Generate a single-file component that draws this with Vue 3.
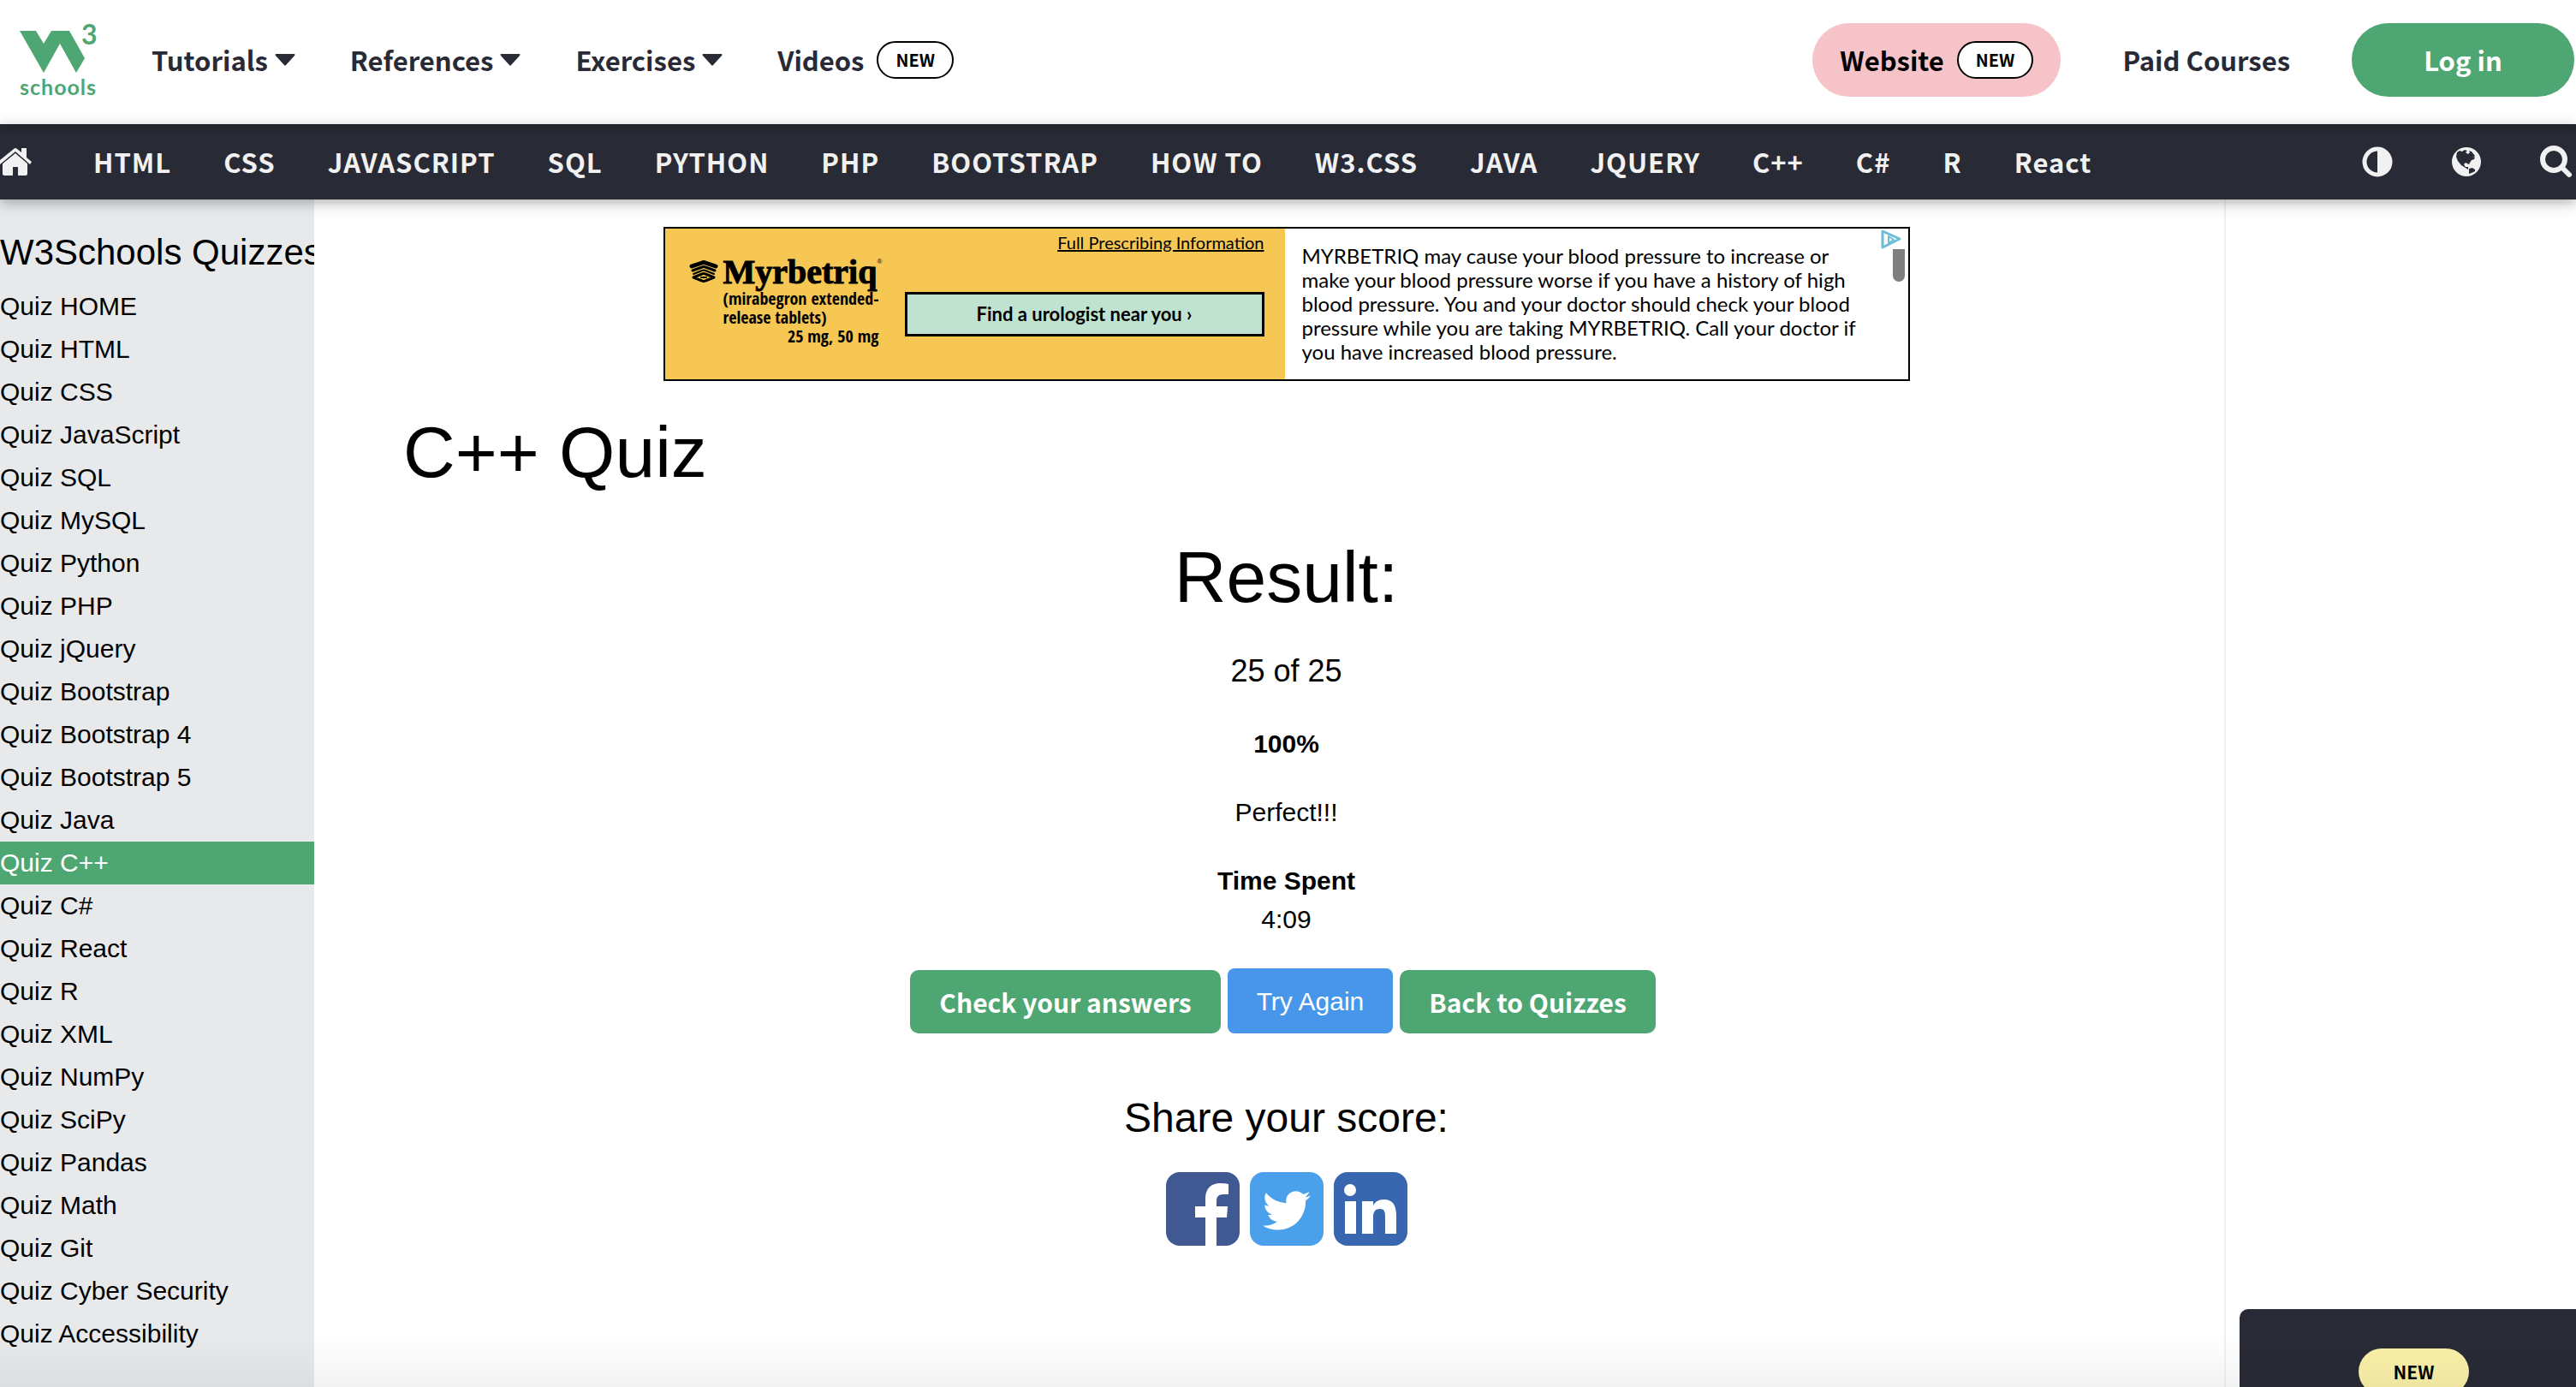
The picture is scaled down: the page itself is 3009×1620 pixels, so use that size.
<script setup>
const menus = ['Tutorials', 'References', 'Exercises']
const topics = [
  'HTML', 'CSS', 'JAVASCRIPT', 'SQL', 'PYTHON', 'PHP', 'BOOTSTRAP', 'HOW TO',
  'W3.CSS', 'JAVA', 'JQUERY', 'C++', 'C#', 'R', 'React',
]
const current = 'C++'
const quizzes = [
  'HOME', 'HTML', 'CSS', 'JavaScript', 'SQL', 'MySQL', 'Python', 'PHP', 'jQuery',
  'Bootstrap', 'Bootstrap 4', 'Bootstrap 5', 'Java', 'C++', 'C#', 'React', 'R', 'XML',
  'NumPy', 'SciPy', 'Pandas', 'Math', 'Git', 'Cyber Security', 'Accessibility',
]
</script>

<template>
  <div class="page">
    <header class="top">
      <a class="logo" href="#" aria-label="W3Schools home">
        <svg width="94" height="86" viewBox="0 0 94 86">
          <path d="M0 9H19L28 24L37 9H58L76 41L66 58L47 24L28 58Z" fill="#4ea673" />
          <text x="72" y="25" class="logo-three">3</text>
          <text x="0" y="84" class="logo-word">schools</text>
        </svg>
      </a>
      <nav class="menus">
        <a v-for="m in menus" :key="m" href="#" class="menu">
          {{ m }}
          <svg width="24" height="14" viewBox="0 0 24 14"><path d="M1 0H23Q24 1 23 2L13 13Q12 14 11 13L1 2Q0 1 1 0Z" fill="currentColor" /></svg>
        </a>
        <a href="#" class="menu videos">Videos <span class="new">NEW</span></a>
      </nav>
      <div class="account">
        <a href="#" class="website">Website <span class="new">NEW</span></a>
        <a href="#" class="menu">Paid Courses</a>
        <button type="button" class="login">Log in</button>
      </div>
    </header>

    <nav class="bar">
      <a href="#" class="home" aria-label="Home">
        <svg width="37" height="32" viewBox="0 0 37 32" fill="#f1f1f1">
          <path d="M18 6L32 18V30Q32 32 30 32H21V22H15V32H6Q3 32 3 30V18Z" />
          <path d="M0 14L16 1Q18 -1 20 1L25 5V0H31V11L37 16L35 19L18 4L0 19Z" />
          <path d="M0 20L18 5L34 19" fill="none" stroke="#282a35" stroke-width="1" />
        </svg>
      </a>
      <a v-for="t in topics" :key="t" href="#" class="topic">{{ t }}</a>
      <div class="tools">
        <button type="button" aria-label="Toggle dark mode">
          <svg width="36" height="36" viewBox="0 0 36 36">
            <circle cx="18" cy="18" r="15" fill="none" stroke="#f1f1f1" stroke-width="5" />
            <path d="M18 3A15 15 0 0 1 18 33Z" fill="#f1f1f1" />
          </svg>
        </button>
        <button type="button" aria-label="Translate">
          <svg width="36" height="36" viewBox="0 0 36 36">
            <circle cx="18" cy="18" r="17" fill="#f1f1f1" />
            <path d="M7 7L10 5L13 6L16 4L19 5L17 7L20 9L22 7L21 5L24 6L28 11L25 13L28 12L27 15L24 16L22 19L21 21L17 19L15 21L17 24L20 24L20 27L17 25L12 22L8 17L6 12Z" fill="#282a35" />
            <path d="M21 26L25 25L28 27L28 29L24 31L21 32L21 29Z" fill="#282a35" />
          </svg>
        </button>
        <button type="button" aria-label="Search">
          <svg width="38" height="38" viewBox="0 0 38 38">
            <circle cx="16" cy="16" r="13" fill="none" stroke="#f1f1f1" stroke-width="6" />
            <path d="M26 26L34 34" stroke="#f1f1f1" stroke-width="6" stroke-linecap="round" />
          </svg>
        </button>
      </div>
    </nav>

    <div class="body">
      <aside class="side">
        <h2>W3Schools Quizzes</h2>
        <a v-for="q in quizzes" :key="q" href="#" :class="{ active: q === current }">Quiz {{ q }}</a>
      </aside>

      <main>
        <section class="ad">
          <div class="ad-brand">
            <div class="drug">
              <svg width="34" height="26" viewBox="0 0 34 26" fill="none" stroke="#000" stroke-linejoin="round" stroke-linecap="round">
                <path d="M3 7L15 3Q17 2 19 3L31 7" stroke-width="5" />
                <path d="M4 12L15 8Q17 7 19 8L30 12" stroke-width="3" />
                <path d="M5 16L15 12Q17 11 19 12L29 16" stroke-width="2" />
                <path d="M5 20L15 16Q17 15 19 16L29 20L19 24Q17 25 15 24Z" stroke-width="3" />
                <path d="M14 20H20" stroke-width="2" />
              </svg>
              <div class="drug-text">
                <div class="drug-name">Myrbetriq<sup>®</sup></div>
                <p>(mirabegron extended-<br />release tablets)</p>
                <p class="dose">25 mg, 50 mg</p>
              </div>
            </div>
            <div class="ad-actions">
              <a href="#">Full Prescribing Information</a>
              <button type="button">Find a urologist near you ›</button>
            </div>
          </div>
          <div class="ad-copy">
            <p>
              MYRBETRIQ may cause your blood pressure to increase or<br />
              make your blood pressure worse if you have a history of high<br />
              blood pressure. You and your doctor should check your blood<br />
              pressure while you are taking MYRBETRIQ. Call your doctor if<br />
              you have increased blood pressure.
            </p>
            <div class="ad-rail">
              <svg width="24" height="23" viewBox="0 0 24 23" fill="none" stroke="#6cbdd6" stroke-width="3" stroke-linejoin="round">
                <path d="M2 2L22 11L2 21Z" />
                <path d="M9 8V16L15 12Z" stroke-width="2" />
              </svg>
              <span class="thumb"></span>
            </div>
          </div>
        </section>

        <h1>C++ Quiz</h1>
        <section class="result">
          <h1>Result:</h1>
          <p class="score">25 of 25</p>
          <p><b>100%</b></p>
          <p>Perfect!!!</p>
          <p><b>Time Spent</b><br />4:09</p>
          <div class="actions">
            <button type="button" class="green">Check your answers</button>
            <button type="button" class="blue">Try Again</button>
            <button type="button" class="green">Back to Quizzes</button>
          </div>
          <h2>Share your score:</h2>
          <div class="share">
            <a href="#" aria-label="Facebook">
              <svg width="86" height="86" viewBox="0 0 86 86">
                <rect width="86" height="86" rx="16" fill="#415993" />
                <path d="M46 86V53H34V40H46V31C46 19 53 13 63 13Q69 13 73 14V26H67C61 26 59 29 59 34V40H72L71 53H59V86Z" fill="#fff" />
              </svg>
            </a>
            <a href="#" aria-label="Twitter">
              <svg width="86" height="86" viewBox="0 0 86 86">
                <rect width="86" height="86" rx="16" fill="#4aa0eb" />
                <path transform="translate(15 17) scale(.109)" fill="#fff" d="M459.37 151.716c.325 4.548.325 9.097.325 13.645 0 138.72-105.583 298.558-298.558 298.558-59.452 0-114.68-17.219-161.137-47.106 8.447.974 16.568 1.299 25.34 1.299 49.055 0 94.213-16.568 130.274-44.832-46.132-.975-84.792-31.188-98.112-72.772 6.498.974 12.995 1.624 19.818 1.624 9.421 0 18.843-1.3 27.614-3.573-48.081-9.747-84.143-51.98-84.143-102.985v-1.299c13.969 7.797 30.214 12.67 47.431 13.319-28.264-18.843-46.781-51.005-46.781-87.391 0-19.492 5.197-37.36 14.294-52.954 51.655 63.675 129.3 105.258 216.365 109.807-1.624-7.797-2.599-15.918-2.599-24.04 0-57.828 46.782-104.934 104.934-104.934 30.213 0 57.502 12.67 76.67 33.137 23.715-4.548 46.456-13.32 66.599-25.34-7.798 24.366-24.366 44.833-46.132 57.827 21.117-2.273 41.584-8.122 60.426-16.243-14.292 20.791-32.161 39.308-52.628 54.253z" />
              </svg>
            </a>
            <a href="#" aria-label="LinkedIn">
              <svg width="86" height="86" viewBox="0 0 86 86">
                <rect width="86" height="86" rx="16" fill="#3867af" />
                <g fill="#fff">
                  <circle cx="19" cy="21" r="7" />
                  <path d="M13 34H26V72H13Z" />
                  <path d="M33 34H46V39C48 35 52 32 58 32C70 32 73 40 73 51V72H60V53C60 48 60 43 54 43C47 43 46 48 46 53V72H33Z" />
                </g>
              </svg>
            </a>
          </div>
        </section>
      </main>

      <aside class="right">
        <div class="promo"><span>NEW</span></div>
      </aside>
    </div>
    <div class="fade"></div>
  </div>
</template>

<style>
body {
  background: #fff;
}
</style>

<style scoped>
.page {
  --source: "Source Sans Pro", "Noto Sans CJK SC", sans-serif;
  --green: #4ea673;
  --dark: #282a35;
  display: flex;
  flex-direction: column;
  min-height: 100vh;
  position: relative;
  overflow: hidden;
  color: #000;
  font: 30px/45px "Liberation Sans", Arial, sans-serif;
}
* {
  box-sizing: border-box;
}
a {
  color: inherit;
  text-decoration: none;
}
button {
  border: 0;
  padding: 0;
  background: none;
  color: inherit;
  font: inherit;
}
svg {
  display: block;
  flex: none;
  overflow: visible;
}
h1,
h2,
p {
  margin: 0;
  font-weight: 400;
}

/* header */
.top {
  display: flex;
  align-items: center;
  padding: 27px 2px 32px 23px;
  font: 700 31px/46px var(--source);
  color: var(--dark);
}
.logo-three {
  font: 700 32px Lato, sans-serif;
  fill: #4ea673;
}
.logo-word {
  font: 700 25px Lato, sans-serif;
  letter-spacing: 1px;
  fill: #4ea673;
}
.menus {
  display: flex;
  gap: 64px;
  margin-left: 60px;
}
.menu {
  display: flex;
  align-items: center;
  gap: 8px;
  white-space: nowrap;
}
.videos {
  gap: 15px;
}
.new {
  display: flex;
  align-items: center;
  height: 44px;
  padding: 0 20px;
  border: 2px solid #000;
  border-radius: 22px;
  background: #fff;
  color: #000;
  font-size: 20px;
  line-height: 30px;
}
.account {
  display: flex;
  align-items: center;
  gap: 72px;
  margin-left: auto;
}
.website {
  display: flex;
  align-items: center;
  gap: 15px;
  height: 86px;
  padding: 0 32px;
  border-radius: 43px;
  background: #f6c3c9;
  color: #000;
}
.login {
  width: 260px;
  height: 86px;
  border-radius: 43px;
  background: var(--green);
  color: #fff;
}

/* topic bar */
.bar {
  display: flex;
  align-items: center;
  gap: 61px;
  height: 88px;
  padding-right: 4px;
  background: linear-gradient(#22252d, #282a35 16px);
  box-shadow: 0 4px 10px rgba(0, 0, 0, 0.16), 0 4px 20px rgba(0, 0, 0, 0.16);
  position: relative;
  z-index: 1;
  color: #f1f1f1;
  font: 700 31px/46px var(--source);
  letter-spacing: 1px;
  white-space: nowrap;
}
.home {
  margin-right: 11px;
}
.tools {
  display: flex;
  align-items: center;
  gap: 68px;
  margin-left: auto;
}

/* columns */
.body {
  display: flex;
  flex: 1;
}
.side {
  display: flex;
  flex-direction: column;
  width: 367px;
  flex: none;
  padding: 30px 0 37px;
  overflow: hidden;
  background: #e7e9eb;
  line-height: 50px;
  white-space: nowrap;
}
.side h2 {
  margin-bottom: 7px;
  font-size: 42px;
  line-height: 63px;
}
.side .active {
  background: var(--green);
  color: #fff;
}
main {
  flex: 1;
  min-width: 0;
  padding: 32px 0 0 40px;
}
main > h1 {
  padding: 0 64px;
}
h1 {
  margin-top: 20px;
  font-size: 84px;
  line-height: 126px;
}
.right {
  display: flex;
  flex-direction: column;
  justify-content: flex-end;
  width: 411px;
  flex: none;
  padding-left: 16px;
  border-left: 2px solid #f1f1f1;
}
.promo {
  display: flex;
  justify-content: center;
  align-items: flex-start;
  height: 91px;
  padding: 46px 0 0;
  overflow: hidden;
  border-top-left-radius: 10px;
  background: var(--dark);
  font: 700 21px/54px var(--source);
}
.promo span {
  padding: 0 41px;
  margin-right: -14px;
  border-radius: 27px;
  background: #fbf1a9;
}

/* advertisement */
.ad {
  display: flex;
  width: 1456px;
  height: 180px;
  margin: 0 auto;
  border: 2px solid #000;
  background: #fff;
}
.ad-brand {
  display: flex;
  justify-content: space-between;
  width: 724px;
  padding: 0 24px 0 28px;
  background: #f6c752;
}
.drug {
  display: flex;
  gap: 6px;
  padding-top: 31px;
}
.drug-name {
  position: relative;
  font: 700 40px/40px "Liberation Serif", serif;
  -webkit-text-stroke: 1px #000;
}
.drug-name sup {
  position: absolute;
  font: 8px/8px "Liberation Sans", sans-serif;
  -webkit-text-stroke: 0;
  top: 4px;
}
.drug svg {
  margin-top: 6px;
}
.drug-text p {
  font: 700 20px/22px "Liberation Sans Narrow", "Open Sans Condensed", "Liberation Sans", sans-serif;
  white-space: nowrap;
}
.drug-text .dose {
  text-align: right;
}
.ad-actions {
  display: flex;
  flex-direction: column;
  align-items: flex-end;
  gap: 44px;
  padding-top: 2px;
  font: 20px/28px Lato, sans-serif;
}
.ad-actions a {
  text-decoration: underline;
}
.ad-actions button {
  width: 420px;
  height: 52px;
  border: 3px solid #000;
  background: #c0e2d0;
  font-size: 22px;
  font-weight: 700;
}
.ad-copy {
  display: flex;
  flex: 1;
  justify-content: space-between;
  padding-left: 20px;
  font: 24px/28px Lato, sans-serif;
  white-space: nowrap;
}
.ad-copy p {
  padding-top: 18px;
}
.ad-rail {
  display: flex;
  flex-direction: column;
  align-items: flex-end;
  padding: 1px 4px 0 0;
}
.ad-rail svg {
  margin-right: 4px;
}
.thumb {
  width: 14px;
  height: 38px;
  border-radius: 0 0 7px 7px;
  background: #7f7f7f;
}

/* result */
.result {
  text-align: center;
}
.result p {
  margin-top: 35px;
}
.result .score {
  margin-top: 20px;
  font-size: 36px;
  line-height: 54px;
}
.actions {
  display: flex;
  justify-content: center;
  align-items: flex-end;
  gap: 8px;
  margin: 35px 8px 0 0;
}
.green {
  height: 74px;
  padding: 0 34px;
  border-radius: 10px;
  background: var(--green);
  color: #fff;
  font: 700 30px/44px var(--source);
}
.blue {
  height: 76px;
  padding: 0 34px;
  border-radius: 8px;
  background: #4896ea;
  color: #fff;
}
.result h2 {
  margin-top: 63px;
  font-size: 48px;
  line-height: 72px;
}
.share {
  display: flex;
  justify-content: center;
  gap: 12px;
  margin-top: 27px;
}
.fade {
  position: absolute;
  inset: auto 0 0;
  height: 60px;
  background: linear-gradient(transparent, rgba(0, 0, 0, 0.05));
  pointer-events: none;
}
</style>
